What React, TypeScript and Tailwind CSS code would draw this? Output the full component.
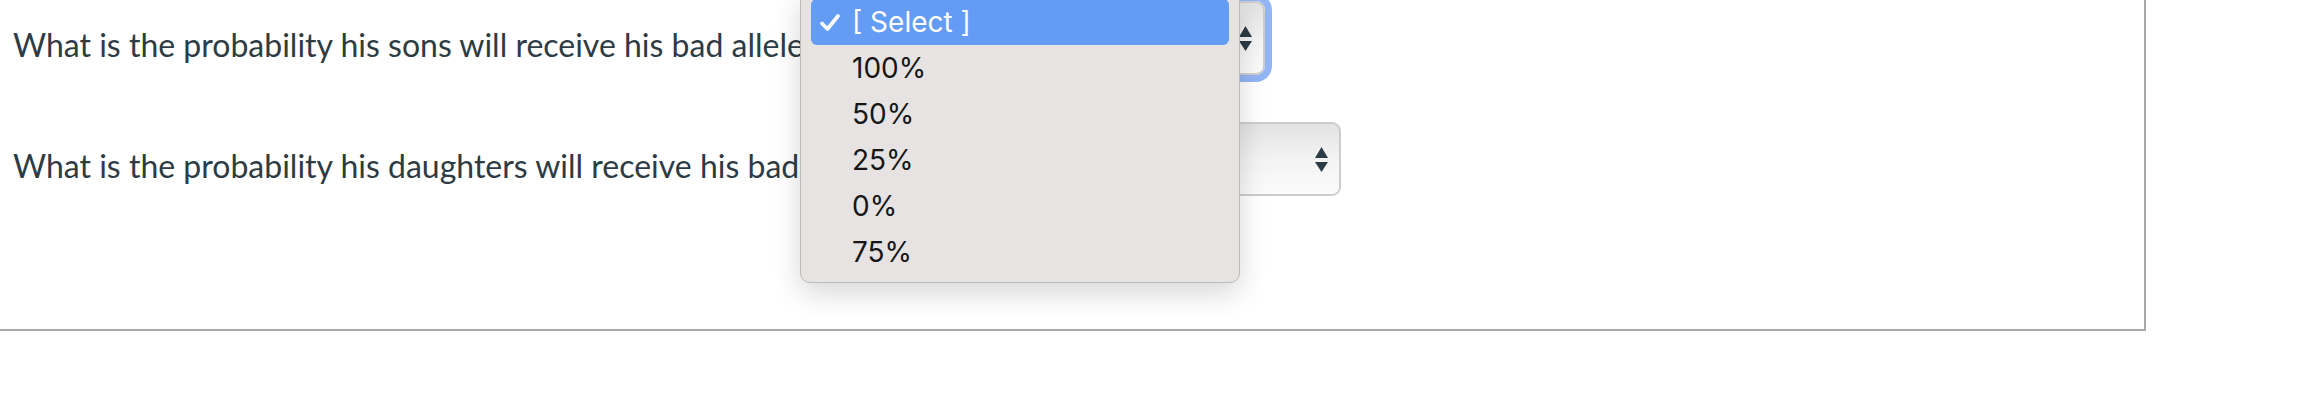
const options = ["[ Select ]", "100%", "50%", "25%", "0%", "75%"]

function Arrows() {
  return (
    <svg width="13" height="25" viewBox="0 0 13 25" className="shrink-0 text-[#2d3b45]">
      <path d="M6.5 0 L13 11 H0 Z" fill="currentColor" />
      <path d="M0 15 H13 L6.5 25 Z" fill="currentColor" />
    </svg>
  )
}

function NativeSelect({ focused }: { focused?: boolean }) {
  return (
    <div
      className={`flex h-[74px] w-[438px] items-center justify-end rounded-[9px] border-2 border-[#cdcdcd] bg-linear-to-b from-[#e3e3e3] via-[#f3f3f3] to-[#fbfbfb] pr-[11px] ${
        focused ? "shadow-[0_0_0_7px_#93b5f5]" : ""
      }`}
    >
      <Arrows />
    </div>
  )
}

function Check() {
  return (
    <svg width="20" height="17" viewBox="0 0 20 17" className="shrink-0">
      <path d="M2 9.5 L7.5 15 L18 2" fill="none" stroke="white" strokeWidth="3.6" strokeLinecap="round" strokeLinejoin="round" />
    </svg>
  )
}

function Menu() {
  return (
    <div className="absolute left-[800px] top-[-9px] w-[440px] rounded-[10px] border border-[#bdbab9] bg-[#e6e3e2] px-[10px] py-[7px] font-['Inter',sans-serif] text-[28px] shadow-[0_10px_28px_rgba(0,0,0,0.16)]">
      {options.map((o, i) => (
        <div
          key={o}
          className={`flex h-[46px] items-center gap-[12px] rounded-[6px] pl-[9px] ${
            i === 0 ? "bg-[#649bf5] text-white" : "text-[#161616]"
          }`}
        >
          {i === 0 ? <Check /> : <span className="w-[20px] shrink-0" />}
          <span>{o}</span>
        </div>
      ))}
    </div>
  )
}

export default function App() {
  return (
    <div className="relative h-[400px] w-[2318px] overflow-hidden bg-white font-['Lato',sans-serif]">
      <div className="h-[331px] w-[2146px] border-r-2 border-b-2 border-[#a9a9a9] pl-[13px] pt-[1px]">
        <div className="flex items-start">
          <p className="whitespace-nowrap pt-[25px] text-[32px] leading-[1.2] text-[#2d3b45]">
            What is the probability his sons will receive his bad allele?
          </p>
          <div className="ml-[10px]">
            <NativeSelect focused />
          </div>
        </div>
        <div className="mt-[47px] flex items-start">
          <p className="whitespace-nowrap pt-[25px] text-[32px] leading-[1.2] text-[#2d3b45]">
            What is the probability his daughters will receive his bad allele?
          </p>
          <div className="ml-[10px]">
            <NativeSelect />
          </div>
        </div>
      </div>
      <Menu />
    </div>
  )
}
